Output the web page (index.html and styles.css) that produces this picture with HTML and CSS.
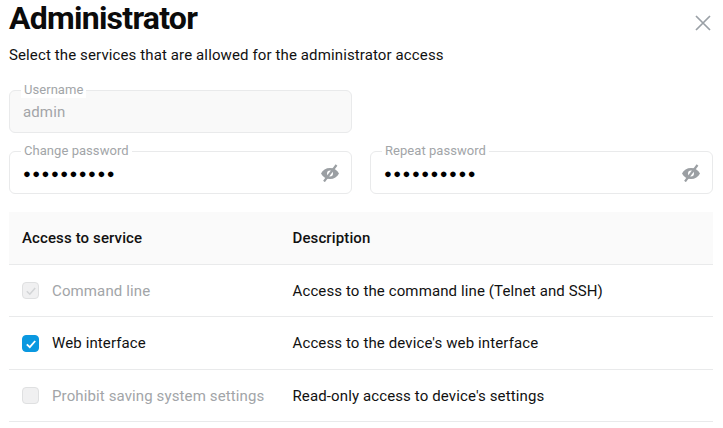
FILE: index.html
```
<!DOCTYPE html>
<html lang="en">
<head>
<meta charset="utf-8">
<title>Administrator</title>
<link rel="stylesheet" href="styles.css">
</head>
<body>
<main class="dialog">
  <header class="head">
    <h1 class="title">Administrator</h1>
    <button class="close" aria-label="Close">
      <svg viewBox="0 0 16 16" width="16" height="16"><path d="M1 1 15 15M15 1 1 15" fill="none" stroke="#9aa0a6" stroke-width="1.7"/></svg>
    </button>
  </header>
  <p class="subtitle">Select the services that are allowed for the administrator access</p>
  <div class="fields">
    <div class="field disabled">
      <span class="label">Username</span>
      <span class="value">admin</span>
    </div>
    <div class="spacer"></div>
    <div class="field">
      <span class="label">Change password</span>
      <span class="dots">●●●●●●●●●●</span>
      <svg class="eye" viewBox="0 0 18 18" width="18" height="18"><path fill-rule="evenodd" d="M0 9.500C1.600 6 5 4 9 4s7.400 2 9 5.500C16.400 13 13 15 9 15S1.600 13 0 9.500ZM9 6.500a3 3 0 1 0 0 6 3 3 0 0 0 0-6Z" fill="#9b9fa3"/><path d="M3 17.500 15.500 1" stroke="#9b9fa3" stroke-width="2.200"/></svg>
    </div>
    <div class="field">
      <span class="label">Repeat password</span>
      <span class="dots">●●●●●●●●●●</span>
      <svg class="eye" viewBox="0 0 18 18" width="18" height="18"><path fill-rule="evenodd" d="M0 9.500C1.600 6 5 4 9 4s7.400 2 9 5.500C16.400 13 13 15 9 15S1.600 13 0 9.500ZM9 6.500a3 3 0 1 0 0 6 3 3 0 0 0 0-6Z" fill="#9b9fa3"/><path d="M3 17.500 15.500 1" stroke="#9b9fa3" stroke-width="2.200"/></svg>
    </div>
  </div>
  <div class="table">
    <div class="row header">
      <div class="c1">Access to service</div>
      <div>Description</div>
    </div>
    <div class="row">
      <div class="c1 muted">
        <span class="check checked-off"><svg viewBox="0 0 16 16" width="16" height="16"><path d="M3.800 8.300 6.800 11.200 12.200 5" fill="none" stroke="#d2d4d6" stroke-width="1.500"/></svg></span>
        Command line
      </div>
      <div>Access to the command line (Telnet and SSH)</div>
    </div>
    <div class="row">
      <div class="c1">
        <span class="check on"><svg viewBox="0 0 16 16" width="16" height="16"><path d="M3.800 8.300 6.800 11.200 12.200 5" fill="none" stroke="#fff" stroke-width="1.800"/></svg></span>
        Web interface
      </div>
      <div>Access to the device's web interface</div>
    </div>
    <div class="row">
      <div class="c1 muted">
        <span class="check"></span>
        Prohibit saving system settings
      </div>
      <div>Read-only access to device's settings</div>
    </div>
  </div>
</main>
</body>
</html>
```
FILE: styles.css
```
* { box-sizing: border-box; }
html, body { margin: 0; height: 100%; overflow: hidden; background: #fff; }
body { font-family: Roboto, "Liberation Sans", sans-serif; color: #111; font-size: 15px; letter-spacing: .12px; }
.dialog { padding: 0 10px 0 9px; }
.head { display: flex; justify-content: space-between; align-items: flex-start; height: 37px; }
.title { margin: 0; font-size: 32px; line-height: 37px; font-weight: 700; color: #0b0b0b; letter-spacing: -.75px; }
.close { border: 0; padding: 0; margin: 15px 2px 0 0; background: none; width: 16px; height: 16px; }
.close svg { display: block; }
.subtitle { margin: 9px 0 0; line-height: 18px; height: 18px; }
.fields { display: grid; grid-template-columns: 343px 343px; column-gap: 18px; row-gap: 18px; margin-top: 26px; }
.spacer { height: 42px; }
.field { position: relative; height: 43px; border: 1px solid #e9eaeb; border-radius: 6px; display: flex; align-items: center; justify-content: space-between; padding: 0 12px 0 13px; }
.field.disabled { background: #f9f9f9; color: #a3a5a8; }
.label { position: absolute; left: 11px; top: -9px; padding: 0 3px; background: #fff; font-size: 13px; line-height: 16px; color: #a2a5a8; letter-spacing: .05px; }
.value { padding-top: 1px; }
.dots { font-size: 13px; letter-spacing: 1.45px; color: #000; padding-top: 1px; }
.eye { display: block; margin-top: 1px; }
.table { margin-top: 18px; }
.row { display: flex; align-items: center; height: 52.500px; padding-top: 1px; border-bottom: 1px solid #e9eaeb; }
.row.header { padding-top: 0; background: #fafafa; font-weight: 500; }
.c1 { width: 283.500px; padding-left: 13px; display: flex; align-items: center; gap: 13px; }
.muted { color: #a2a5a8; }
.check { width: 17px; height: 17px; border-radius: 4px; border: 1px solid #dfe0e1; background: #f0f0f1; display: block; flex: none; }
.check svg { display: block; margin: 0; }
.check.on { background: #0a98e0; border-color: #0a98e0; }
```
